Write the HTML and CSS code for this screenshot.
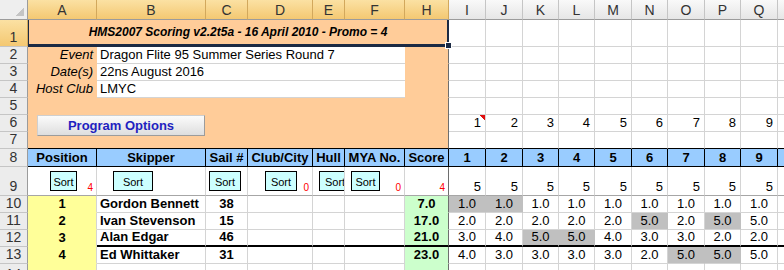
FILE: index.html
```html
<!DOCTYPE html>
<html>
<head>
  <title>HMS2007 Scoring</title>
  <link rel="stylesheet" href="styles.css">
</head>
<body>

<div class="sheet">
  <!-- column headers -->
  <div class="corner"></div>
  <div class="ch sel">A</div><div class="ch sel">B</div><div class="ch sel">C</div><div class="ch sel">D</div>
  <div class="ch sel">E</div><div class="ch sel">F</div><div class="ch sel">H</div>
  <div class="ch">I</div><div class="ch">J</div><div class="ch">K</div><div class="ch">L</div><div class="ch">M</div>
  <div class="ch">N</div><div class="ch">O</div><div class="ch">P</div><div class="ch">Q</div><div class="ch"></div>

  <!-- row 1 -->
  <div class="rh sel">1</div>
  <div class="title">HMS2007 Scoring v2.2t5a - 16 April 2010 - Promo = 4</div>
  <div></div><div></div><div></div><div></div><div></div><div></div><div></div><div></div><div></div><div></div>

  <!-- rows 2-4 -->
  <div class="rh">2</div>
  <div class="lab">Event</div>
  <div class="val">Dragon Flite 95 Summer Series Round 7</div>
  <div class="pch"></div>
  <div></div><div></div><div></div><div></div><div></div><div></div><div></div><div></div><div></div><div></div>

  <div class="rh">3</div>
  <div class="lab">Date(s)</div>
  <div class="val">22ns August 2016</div>
  <div class="pch"></div>
  <div></div><div></div><div></div><div></div><div></div><div></div><div></div><div></div><div></div><div></div>

  <div class="rh">4</div>
  <div class="lab">Host Club</div>
  <div class="val">LMYC</div>
  <div class="pch"></div>
  <div></div><div></div><div></div><div></div><div></div><div></div><div></div><div></div><div></div><div></div>

  <!-- rows 5-7 -->
  <div class="rh">5</div>
  <div class="opts"><button class="prog">Program Options</button></div>
  <div></div><div></div><div></div><div></div><div></div><div></div><div></div><div></div><div></div><div></div>

  <div class="rh">6</div>
  <div class="num note">1</div><div class="num">2</div><div class="num">3</div><div class="num">4</div><div class="num">5</div>
  <div class="num">6</div><div class="num">7</div><div class="num">8</div><div class="num">9</div><div></div>

  <div class="rh">7</div>
  <div class="r7"></div><div class="r7"></div><div class="r7"></div><div class="r7"></div><div class="r7"></div>
  <div class="r7"></div><div class="r7"></div><div class="r7"></div><div class="r7"></div><div class="r7"></div>

  <!-- row 8: headings -->
  <div class="rh">8</div>
  <div class="hd">Position</div><div class="hd">Skipper</div><div class="hd">Sail #</div><div class="hd">Club/City</div>
  <div class="hd">Hull</div><div class="hd">MYA No.</div><div class="hd">Score</div>
  <div class="hd">1</div><div class="hd">2</div><div class="hd">3</div><div class="hd">4</div><div class="hd">5</div>
  <div class="hd">6</div><div class="hd">7</div><div class="hd">8</div><div class="hd">9</div><div class="hd"></div>

  <!-- row 9: sort buttons -->
  <div class="rh">9</div>
  <div class="s9"><button class="sort b-pos">Sort</button><span class="red">4</span></div>
  <div class="s9"><button class="sort b-skip">Sort</button></div>
  <div class="s9"><button class="sort b-sail">Sort</button></div>
  <div class="s9"><button class="sort b-club">Sort</button><span class="red">0</span></div>
  <div class="s9"><button class="sort b-hull">Sort</button></div>
  <div class="s9"><button class="sort b-mya">Sort</button><span class="red">0</span></div>
  <div class="s9 dk"><span class="red">4</span></div>
  <div class="num r9">5</div><div class="num r9">5</div><div class="num r9">5</div><div class="num r9">5</div><div class="num r9">5</div>
  <div class="num r9">5</div><div class="num r9">5</div><div class="num r9">5</div><div class="num r9">5</div><div class="r9"></div>

  <!-- rows 10-13: results -->
  <div class="rh">10</div>
  <div class="pos">1</div><div class="name">Gordon Bennett</div><div class="sail">38</div>
  <div></div><div></div><div></div>
  <div class="score">7.0</div>
  <div class="race dis">1.0</div><div class="race dis">1.0</div><div class="race">1.0</div><div class="race">1.0</div><div class="race">1.0</div>
  <div class="race">1.0</div><div class="race">1.0</div><div class="race">1.0</div><div class="race">1.0</div><div></div>

  <div class="rh">11</div>
  <div class="pos">2</div><div class="name">Ivan Stevenson</div><div class="sail">15</div>
  <div></div><div></div><div></div>
  <div class="score">17.0</div>
  <div class="race">2.0</div><div class="race">2.0</div><div class="race">2.0</div><div class="race">2.0</div><div class="race">2.0</div>
  <div class="race dis">5.0</div><div class="race">2.0</div><div class="race dis">5.0</div><div class="race">5.0</div><div></div>

  <div class="rh">12</div>
  <div class="pos">3</div><div class="name cut">Alan Edgar</div><div class="sail cut">46</div>
  <div class="cut"></div><div class="cut"></div><div class="cut"></div>
  <div class="score cut">21.0</div>
  <div class="race cut">3.0</div><div class="race cut">4.0</div><div class="race dis cut">5.0</div><div class="race dis cut">5.0</div><div class="race cut">4.0</div>
  <div class="race cut">3.0</div><div class="race cut">3.0</div><div class="race cut">2.0</div><div class="race cut">2.0</div><div class="cut"></div>

  <div class="rh">13</div>
  <div class="pos">4</div><div class="name">Ed Whittaker</div><div class="sail">31</div>
  <div></div><div></div><div></div>
  <div class="score">23.0</div>
  <div class="race">4.0</div><div class="race">3.0</div><div class="race">3.0</div><div class="race">3.0</div><div class="race">3.0</div>
  <div class="race">2.0</div><div class="race dis">5.0</div><div class="race dis">5.0</div><div class="race">5.0</div><div></div>

  <div class="rh last">14</div>
  <div class="pos"></div><div></div><div></div><div></div><div></div><div></div>
  <div class="score"></div>
  <div></div><div></div><div></div><div></div><div></div><div></div><div></div><div></div><div></div><div></div>
</div>

</body>
</html>
```

FILE: styles.css
```css
body {
  margin: 0;
  font-family: "Liberation Sans", Arial, sans-serif;
  font-size: 13px;
  background: #fff;
  overflow: hidden;
}
.sheet {
  display: grid;
  grid-template-columns: 28px 69px 109px 42px 65px 32px 60px 44px 37px 37px 36px 36px 37px 36px 37px 36px 37px 1fr;
  grid-template-rows: 20px 27px 17px 17px 17px 17px 17px 17px 18px 29px 17px 17px 17px 17px 17px;
}
.sheet > div {
  box-sizing: border-box;
  border-right: 1px solid #d4d4d4;
  border-bottom: 1px solid #d4d4d4;
  white-space: nowrap;
  overflow: hidden;
  min-width: 0;
  display: flex;
  align-items: flex-end;
  padding: 0 3px 1px;
}

/* headers */
.sheet > .corner {
  background: #eeeeee linear-gradient(135deg, transparent 50%, #c4c4c4 50%) no-repeat right 3px bottom 3px / 9px 9px;
  border-right-color: #9b9b9b;
  border-bottom-color: #9b9b9b;
}
.sheet > .ch {
  justify-content: center;
  align-items: center;
  padding: 0;
  font-size: 14px;
  color: #333;
  background: linear-gradient(#f9f9f9, #e6e6e6);
  border-right-color: #c5c5c5;
  border-bottom-color: #9b9b9b;
}
.sheet > .rh {
  justify-content: center;
  padding: 0 0 1px;
  font-size: 14px;
  color: #333;
  background: #ececec;
  border-right-color: #9b9b9b;
  border-bottom-color: #c5c5c5;
}
.sheet > .last {
  align-items: flex-start;
  padding: 2px 0 0;
}
.sheet > .sel {
  background: linear-gradient(#fbe1a3, #f4c872);
  border-right-color: #d2a85c;
}

/* top block */
.sheet > .title {
  grid-column: span 7;
  position: relative;
  z-index: 1;
  overflow: visible;
  justify-content: center;
  align-items: center;
  font-size: 12px;
  font-weight: bold;
  font-style: italic;
  background: #ffcc99;
  border-left: 1px solid #1b2a44;
  border-right: 2px solid #1b2a44;
  border-bottom: 3px solid #1b2a44;
}
.title::after {
  content: "";
  position: absolute;
  right: -5px;
  bottom: -5px;
  width: 5px;
  height: 5px;
  background: #1b2a44;
  border: 1px solid #fff;
}
.sheet > .lab {
  justify-content: flex-end;
  font-style: italic;
  background: #ffcc99;
  border-color: #ffcc99;
}
.sheet > .val {
  grid-column: span 5;
  border-right: 0;
}
.sheet > .pch {
  background: #ffcc99;
  border-bottom-color: #ffcc99;
  border-right-color: #6e6e6e;
}
.sheet > .opts {
  grid-column: span 7;
  grid-row: span 3;
  align-items: flex-start;
  padding: 17px 0 0 9px;
  background: #ffcc99;
  border-right-color: #6e6e6e;
  border-bottom-color: #000;
}
.prog {
  width: 168px;
  height: 21px;
  box-sizing: border-box;
  font: bold 13px "Liberation Sans", Arial, sans-serif;
  color: #1f1fc0;
  background: linear-gradient(#fbfbfb, #dedede);
  border: 1px solid #cfcfcf;
  border-right-color: #9c9c9c;
  border-bottom-color: #9c9c9c;
  padding: 0;
}
.sheet > .num {
  justify-content: flex-end;
  padding-right: 4px;
}
.sheet > .note {
  background: linear-gradient(225deg, #e01010 4px, transparent 4px);
}
.sheet > .r7 {
  border-bottom-color: #000;
}

/* table head */
.sheet > .hd {
  justify-content: center;
  align-items: center;
  padding: 0;
  font-weight: bold;
  background: #99ccff;
  border-right-color: #000;
  border-bottom-color: #000;
}
.sheet > .s9 {
  align-items: flex-start;
  padding: 4px 3px 1px 0;
  border-bottom-color: #a6a6a6;
}
.sheet > .r9 {
  border-bottom-color: #a6a6a6;
}
.sheet > .dk {
  border-right-color: #6e6e6e;
}
.sort {
  flex: none;
  height: 20px;
  box-sizing: border-box;
  padding: 2px 0 0;
  font: 11px "Liberation Sans", Arial, sans-serif;
  color: #000;
  text-align: center;
  background: #ccffff;
  border: 1px solid #000;
  border-radius: 0;
  overflow: hidden;
  white-space: nowrap;
}
.b-pos { margin-left: 22px; width: 27px; }
.b-skip { margin-left: 16px; width: 40px; }
.b-sail { margin-left: 3px; width: 32px; }
.b-club { margin-left: 17px; width: 32px; }
.b-hull { margin-left: 6px; width: 31px; text-align: left; padding-left: 5px; }
.b-mya { margin-left: 6px; width: 29px; }
.red {
  margin-left: auto;
  align-self: flex-end;
  font-size: 10px;
  color: #f00;
  padding-bottom: 1px;
}

/* results */
.sheet > .pos {
  justify-content: center;
  font-weight: bold;
  background: #ffff99;
  border-bottom-color: #ffff99;
}
.sheet > .name {
  font-weight: bold;
}
.sheet > .sail {
  justify-content: center;
  font-weight: bold;
}
.sheet > .score {
  justify-content: center;
  font-weight: bold;
  background: #ccffcc;
  border-bottom-color: #ccffcc;
  border-right-color: #6e6e6e;
}
.sheet > .race {
  justify-content: center;
}
.sheet > .dis {
  background: #c0c0c0;
  border-right-color: #c0c0c0;
}
.sheet > .cut {
  border-bottom: 2px solid #000;
}
```
